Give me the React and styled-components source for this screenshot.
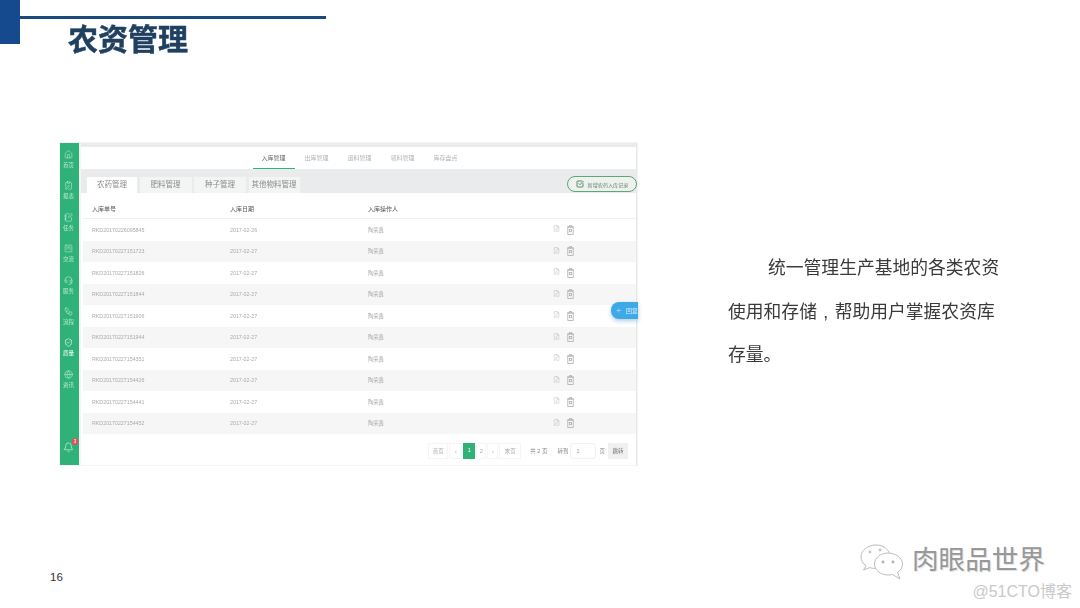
import React from "react";
import styled, { createGlobalStyle } from "styled-components";
import { Home, ClipboardPen, NotebookPen, SquareKanban, Headset, Workflow, ShieldCheck, Globe, Bell, FilePen, ArrowLeft, SquareCheckBig } from "lucide-react";

const CJK = `"Liberation Sans", "Noto Sans CJK SC", sans-serif`;

const GlobalStyle = createGlobalStyle`
  html, body {
    margin: 0;
    padding: 0;
    background: #fff;
  }
  * { box-sizing: border-box; }
`;

const Slide = styled.div`
  width: 1080px;
  height: 608px;
  overflow: hidden;
  display: flex;
  flex-direction: column;
  background: #fff;
  font-family: ${CJK};
`;

const Header = styled.header`
  display: flex;
  height: 60px;
  flex: none;
`;

const CornerBlock = styled.div`
  width: 20px;
  height: 44px;
  background: #164a8e;
`;

const HeaderText = styled.div`
  padding-top: 16px;
`;

const HeaderLine = styled.div`
  width: 306px;
  height: 3px;
  background: #1d4a7c;
`;

const Title = styled.h1`
  margin: 2px 0 0 48px;
  font-size: 30px;
  line-height: 38px;
  font-weight: 700;
  color: #1f4060;
  -webkit-text-stroke: 0.5px #1f4060;
  filter: blur(0.4px);
`;

const Content = styled.main`
  display: flex;
  padding: 82px 0 0 59px;
  gap: 90px;
`;

const Shot = styled.section`
  position: relative;
  width: 579px;
  height: 324px;
  display: flex;
  gap: 2px;
  padding: 1px;
  background: #f4f4f4;
  filter: blur(0.6px);
`;

const Sidebar = styled.nav`
  width: 19px;
  flex: none;
  display: flex;
  flex-direction: column;
  align-items: center;
  padding: 7px 2px 0 0;
  background: #2fb277;
`;

const SideItem = styled.div`
  height: 31.4px;
  display: flex;
  flex-direction: column;
  align-items: center;
  gap: 3px;
  color: ${(p) => (p.$active ? "#fff" : "#b9e8d2")};
  font-size: 5.5px;
  line-height: 7px;
  white-space: nowrap;
`;

const BellWrap = styled.div`
  position: relative;
  margin-top: auto;
  margin-bottom: 12px;
  color: #d5f3e4;
  line-height: 0;
`;

const Badge = styled.span`
  position: absolute;
  top: -4px;
  right: -4px;
  width: 6px;
  height: 7px;
  border-radius: 50%;
  background: #ee4a5b;
  color: #fff;
  font-size: 4.5px;
  line-height: 7px;
  text-align: center;
`;

const Main = styled.div`
  flex: 1;
  display: flex;
  flex-direction: column;
  background: #fff;
  border-right: 1px solid #e6e8e8;
`;

const TopStripe = styled.div`
  flex: none;
  height: 4px;
  background: #e9ebec;
`;

const TopNav = styled.div`
  flex: none;
  height: 22px;
  display: flex;
  justify-content: center;
  padding-left: 2px;
  gap: 1px;
`;

const NavLink = styled.div`
  width: 42px;
  padding-top: 1px;
  text-align: center;
  font-size: 6px;
  line-height: 20px;
  color: ${(p) => (p.$active ? "#666" : "#b4b4b4")};
  border-bottom: 1px solid ${(p) => (p.$active ? "#2fb277" : "transparent")};
`;

const SubBar = styled.div`
  flex: none;
  height: 24px;
  display: flex;
  align-items: flex-end;
  justify-content: space-between;
  padding-left: 6px;
  background: #e9ebec;
`;

const Tabs = styled.div`
  display: flex;
  gap: 2.5px;
`;

const Tab = styled.div`
  width: ${(p) => p.$w}px;
  height: 16px;
  text-align: center;
  font-size: 7.5px;
  line-height: 16px;
  color: #8c8c8c;
  background: ${(p) => (p.$active ? "#fff" : "#f3f4f4")};
`;

const AddButton = styled.div`
  width: 70px;
  height: 16px;
  margin: 0 -1px 1px 0;
  display: flex;
  align-items: center;
  justify-content: center;
  gap: 4px;
  border: 1px solid #5fa57a;
  border-radius: 8px;
  font-size: 5.1px;
  color: #5c8a70;
  background: #eef1ee;
`;

const TableRow = styled.div`
  flex: none;
  display: grid;
  grid-template-columns: 138px 138px 185px auto;
  align-items: center;
  height: ${(p) => (p.$head ? "26px" : "21.5px")};
  padding: ${(p) => (p.$head ? "5px 0 0 9px" : "0 0 0 9px")};
  margin-left: 2px;
  font-size: ${(p) => (p.$head ? "6px" : "5.3px")};
  color: ${(p) => (p.$head ? "#555" : "#aaa")};
  background: ${(p) => (p.$odd ? "#f6f6f6" : "#fff")};
  border-bottom: ${(p) => (p.$head ? "1px solid #f0f0f0" : "none")};
`;

const RowIcons = styled.div`
  display: flex;
  align-items: center;
  gap: 7px;
  color: #a8a8a8;
  line-height: 0;
`;

const Pager = styled.div`
  flex: none;
  display: flex;
  align-items: flex-start;
  justify-content: flex-end;
  gap: 1px;
  height: 31px;
  padding: 9px 8px 0 0;
  font-size: 5.5px;
  color: #999;
`;

const PageBtn = styled.div`
  width: ${(p) => p.$w}px;
  height: 16px;
  text-align: center;
  line-height: 15px;
  color: ${(p) => (p.$on ? "#fff" : "#aaa")};
  background: ${(p) => (p.$on ? "#2fb277" : "#fff")};
  border: ${(p) => (p.$on ? "none" : "1px solid #f5f5f5")};
`;

const PagerText = styled.span`
  margin: 0 ${(p) => p.$r}px 0 ${(p) => p.$l}px;
  line-height: 16px;
  color: #888;
`;

const PageInput = styled.div`
  width: 26px;
  height: 16px;
  padding-left: 5px;
  line-height: 15px;
  border: 1px solid #f2f2f2;
  border-radius: 3px;
`;

const JumpBtn = styled.div`
  width: 20px;
  height: 16px;
  text-align: center;
  line-height: 16px;
  color: #777;
  background: #f0f0f0;
`;

const FloatBtn = styled.div`
  position: absolute;
  top: 160px;
  right: 0;
  width: 27px;
  height: 17px;
  display: flex;
  align-items: center;
  gap: 4px;
  padding-left: 5px;
  border-radius: 8px 0 0 8px;
  background: #3fa9e8;
  box-shadow: 0 2px 4px rgba(60, 130, 180, 0.4);
  color: #d8f0ff;
  font-size: 6px;
  white-space: nowrap;
  overflow: hidden;
`;

const Description = styled.p`
  width: 280px;
  margin: 105px 0 0;
  font-size: 17.8px;
  line-height: 43.5px;
  text-indent: 40px;
  color: #3a3a3a;
  filter: blur(0.3px);
`;

// the slide's comma sits mid-cell: a narrow comma padded out to one full cell
const Comma = styled.span`
  padding: 0 6.4px;
`;

const Footer = styled.footer`
  margin-top: auto;
  height: 65px;
  display: flex;
  justify-content: space-between;
  align-items: flex-start;
  padding: 0 8px 0 50px;
`;

const PageNo = styled.div`
  margin-top: 27px;
  font-size: 11.5px;
  line-height: 14px;
  color: #333;
`;

const Watermark = styled.div`
  display: flex;
  flex-direction: column;
  align-items: flex-end;
`;

const WatermarkRow = styled.div`
  display: flex;
  align-items: center;
  gap: 7px;
  margin-right: 27px;
`;

const WatermarkName = styled.span`
  margin-bottom: 3px;
  font-size: 26.6px;
  line-height: 34px;
  color: #989898;
  text-shadow: 1px 1px 0 #e2e2e2;
`;

const WatermarkSite = styled.span`
  margin-top: 2px;
  font-size: 16px;
  line-height: 20px;
  color: #c9c9c9;
`;

const DocIcon = styled(FilePen)`
  margin-top: -2px;
`;

const TrashIcon = () => (
  <svg width="7" height="10" viewBox="0 0 8 12" fill="none" stroke="currentColor" strokeWidth="0.9">
    <path d="M0.200 2.400H7.800M2.700 2.400V0.600H5.300V2.400" />
    <rect x="0.800" y="2.400" width="6.400" height="9" />
    <rect x="2.800" y="5.500" width="2.400" height="2.600" />
  </svg>
);

const WeChatMark = () => (
  <svg width="46" height="36" viewBox="0 0 46 36" fill="#fff" stroke="#bdbdbd" strokeWidth="1">
    <path d="M17 1C8.500 1 2 6.500 2 13c0 3.600 2 6.600 5 8.800L4.500 26l6-2.400c1.800.6 4 .9 6.500.9 8.500 0 14-5 14-11.500S25.500 1 17 1Z" />
    <path d="M29 9c-7.500 0-13.500 5-13.500 11S21.500 31 29 31c1.600 0 3-.2 4.300-.6L41 35l-2.400-6.600C41.800 26.300 43.500 23.400 43.500 20 43.500 14 36.500 9 29 9Z" />
    <circle cx="11" cy="8" r="1.400" fill="#c4c4c4" stroke="none" />
    <circle cx="21" cy="6" r="1.400" fill="#c4c4c4" stroke="none" />
    <circle cx="24" cy="18" r="1.400" fill="#b0b0b0" stroke="none" />
    <circle cx="34" cy="18" r="1.400" fill="#b0b0b0" stroke="none" />
  </svg>
);

const sideItems = [
  { Icon: Home, label: "首页" },
  { Icon: ClipboardPen, label: "报表" },
  { Icon: NotebookPen, label: "任务" },
  { Icon: SquareKanban, label: "交流" },
  { Icon: Headset, label: "服务" },
  { Icon: Workflow, label: "流程" },
  { Icon: ShieldCheck, label: "质量", active: true },
  { Icon: Globe, label: "资讯" },
];

const navLinks = ["入库管理", "出库管理", "退料管理", "领料管理", "库存盘点"];

const tabs = [
  { label: "农药管理", w: 50, active: true },
  { label: "肥料管理", w: 52 },
  { label: "种子管理", w: 52 },
  { label: "其他物料管理", w: 51 },
];

const rows = [
  ["RKD20170226095845", "2017-02-26"],
  ["RKD20170227151723", "2017-02-27"],
  ["RKD20170227151826", "2017-02-27"],
  ["RKD20170227151844", "2017-02-27"],
  ["RKD20170227151906", "2017-02-27"],
  ["RKD20170227151944", "2017-02-27"],
  ["RKD20170227154351", "2017-02-27"],
  ["RKD20170227154426", "2017-02-27"],
  ["RKD20170227154441", "2017-02-27"],
  ["RKD20170227154452", "2017-02-27"],
];

export default function App() {
  return (
    <Slide>
      <GlobalStyle />
      <Header>
        <CornerBlock />
        <HeaderText>
          <HeaderLine />
          <Title>农资管理</Title>
        </HeaderText>
      </Header>

      <Content>
        <Shot>
          <Sidebar>
            {sideItems.map(({ Icon, label, active }) => (
              <SideItem key={label} $active={active}>
                <Icon size={9} strokeWidth={1.6} />
                {label}
              </SideItem>
            ))}
            <BellWrap>
              <Bell size={11} strokeWidth={1.5} />
              <Badge>3</Badge>
            </BellWrap>
          </Sidebar>

          <Main>
            <TopStripe />
            <TopNav>
              {navLinks.map((link, i) => (
                <NavLink key={link} $active={i === 0}>{link}</NavLink>
              ))}
            </TopNav>
            <SubBar>
              <Tabs>
                {tabs.map((t) => (
                  <Tab key={t.label} $w={t.w} $active={t.active}>{t.label}</Tab>
                ))}
              </Tabs>
              <AddButton>
                <SquareCheckBig size={8} strokeWidth={2.4} color="#2f7a4a" />
                新增农药入库记录
              </AddButton>
            </SubBar>
            <TableRow $head>
              <div>入库单号</div>
              <div>入库日期</div>
              <div>入库操作人</div>
            </TableRow>
            {rows.map(([id, date], i) => (
              <TableRow key={id} $odd={i % 2 === 1}>
                <div>{id}</div>
                <div>{date}</div>
                <div>陶荣鑫</div>
                <RowIcons>
                  <DocIcon size={7} strokeWidth={1.3} />
                  <TrashIcon />
                </RowIcons>
              </TableRow>
            ))}
            <Pager>
              <PageBtn $w={20}>首页</PageBtn>
              <PageBtn $w={13}>‹</PageBtn>
              <PageBtn $w={12} $on>1</PageBtn>
              <PageBtn $w={10}>2</PageBtn>
              <PageBtn $w={11}>›</PageBtn>
              <PageBtn $w={22}>末页</PageBtn>
              <PagerText $l={8} $r={5}>共 2 页</PagerText>
              <PagerText $l={4} $r={1}>转到</PagerText>
              <PageInput>1</PageInput>
              <PagerText $l={2} $r={2}>页</PagerText>
              <JumpBtn>跳转</JumpBtn>
            </Pager>
          </Main>

          <FloatBtn>
            <ArrowLeft size={7} strokeWidth={2} />
            回复
          </FloatBtn>
        </Shot>

        <Description>
          统一管理生产基地的各类农资使用和存储<Comma>,</Comma>帮助用户掌握农资库存量。
        </Description>
      </Content>

      <Footer>
        <PageNo>16</PageNo>
        <Watermark>
          <WatermarkRow>
            <WeChatMark />
            <WatermarkName>肉眼品世界</WatermarkName>
          </WatermarkRow>
          <WatermarkSite>@51CTO博客</WatermarkSite>
        </Watermark>
      </Footer>
    </Slide>
  );
}
